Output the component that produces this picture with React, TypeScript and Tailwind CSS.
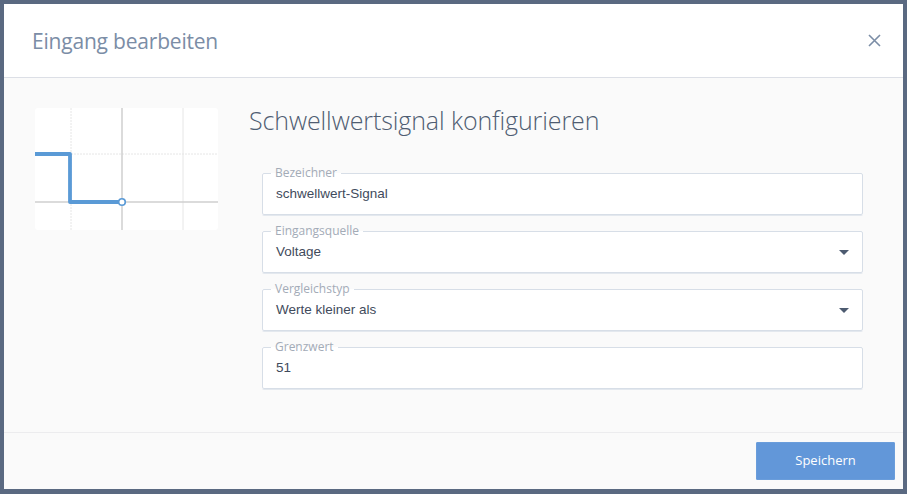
import React from "react";

function Field({ label, value, select }: { label: string; value: string; select?: boolean }) {
  return (
    <fieldset className="m-0 p-0 border border-[#d7dee7] bg-white rounded-[2px] shadow-[0_1px_0_#e3e8ee]">
      <legend className="ml-[8px] px-[4px] text-[12px] leading-[12px] text-[#a3abb7] [font-family:'Open_Sans',sans-serif]">
        {label}
      </legend>
      <div className="h-[35px] pt-[6px] pl-[13px] pr-[13px] flex items-start justify-between">
        <span className="leading-[18px] text-[13.5px] text-[#3f4b5c] [font-family:'Liberation_Sans',Arial,sans-serif]">
          {value}
        </span>
        {select && (
          <svg width="10" height="5" viewBox="0 0 10 5" className="mt-[7px]">
            <polygon points="0,0 10,0 5,5" fill="#4d5b70" />
          </svg>
        )}
      </div>
    </fieldset>
  );
}

export default function App() {
  return (
    <div className="w-[907px] h-[494px] bg-[#5a6981] p-[4px] [font-family:'Open_Sans',sans-serif]">
      <div className="w-[899px] h-[485px] bg-[#fafafa] flex flex-col">
        <div className="h-[74px] shrink-0 bg-white border-b border-[#dcdfe6] flex items-center justify-between pl-[28px] pr-[22px]">
          <span className="text-[21px] text-[#7b8da6] tracking-[-0.2px] pt-[2px]">Eingang bearbeiten</span>
          <svg width="13" height="13" viewBox="0 0 13 13">
            <path d="M1 1 L12 12 M12 1 L1 12" stroke="#7b8da6" strokeWidth="1.6" fill="none" />
          </svg>
        </div>
        <div className="flex-1 flex pl-[31px] pt-[30px] border-b border-[#ececee]">
          <div className="w-[183px] h-[122px] bg-white rounded-[3px] shrink-0">
            <svg width="183" height="122" viewBox="0 0 183 122">
              <line x1="36" y1="0" x2="36" y2="122" stroke="#e6e6e6" strokeWidth="1" strokeDasharray="2 1" />
              <line x1="148" y1="0" x2="148" y2="122" stroke="#e6e6e6" strokeWidth="1" />
              <line x1="0" y1="46" x2="183" y2="46" stroke="#e6e6e6" strokeWidth="1" strokeDasharray="2 1" />
              <line x1="87" y1="0" x2="87" y2="122" stroke="#cfcfcf" strokeWidth="1.5" />
              <line x1="0" y1="94" x2="183" y2="94" stroke="#cfcfcf" strokeWidth="1.5" />
              <path d="M0 46 H35 V94 H84" stroke="#5a9ad6" strokeWidth="3.8" fill="none" strokeLinejoin="round" />
              <circle cx="87" cy="94" r="3.3" fill="white" stroke="#5a9ad6" strokeWidth="1.6" />
            </svg>
          </div>
          <div className="ml-[31px] flex flex-col">
            <div className="text-[25px] leading-[32px] text-[#4f5d72] font-light -mt-[4px] tracking-[-0.1px]">
              Schwellwertsignal konfigurieren
            </div>
            <div className="ml-[13px] mt-[31px] w-[601px] flex flex-col gap-[10px]">
              <Field label="Bezeichner" value="schwellwert-Signal" />
              <Field label="Eingangsquelle" value="Voltage" select />
              <Field label="Vergleichstyp" value="Werte kleiner als" select />
              <Field label="Grenzwert" value="51" />
            </div>
          </div>
        </div>
        <div className="h-[56px] shrink-0 flex justify-end items-start pt-[9px] pr-[8px]">
          <button className="w-[139px] h-[38px] bg-[#6297d9] border border-[#6a9ddb] rounded-[1px] text-white text-[13px]">
            Speichern
          </button>
        </div>
      </div>
    </div>
  );
}
